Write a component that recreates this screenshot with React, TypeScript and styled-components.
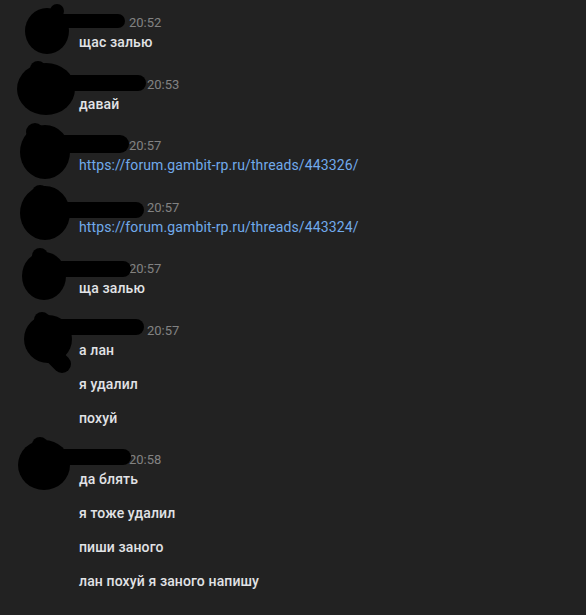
import styled, { createGlobalStyle } from 'styled-components';

interface Scribble {
  head: [number, number, number, number];
  bump?: [number, number, number];
  stroke: { x1: number; x2: number; y: number; w: number };
  tail?: [number, number, number, number];
}

interface Group {
  nameWidth: number;
  time: string;
  scribble: Scribble;
  messages: { text: string; link?: boolean }[];
}

const GROUPS: Group[] = [
  {
    nameWidth: 44,
    time: '20:52',
    scribble: { head: [47, 17, 22, 23], bump: [57, -3, 7], stroke: { x1: 58, x2: 118, y: 7, w: 14 } },
    messages: [{ text: 'щас залью' }]
  },
  {
    nameWidth: 62,
    time: '20:53',
    scribble: { head: [46, 13, 29, 26], bump: [38, -7, 8], stroke: { x1: 60, x2: 138, y: 7, w: 16 } },
    messages: [{ text: 'давай' }]
  },
  {
    nameWidth: 44,
    time: '20:57',
    scribble: { head: [45, 15, 25, 27], bump: [35, -5, 9], stroke: { x1: 50, x2: 120, y: 7, w: 18 } },
    messages: [{ text: 'https://forum.gambit-rp.ru/threads/443326/', link: true }]
  },
  {
    nameWidth: 62,
    time: '20:57',
    scribble: { head: [45, 14, 25, 27], bump: [40, -6, 8], stroke: { x1: 55, x2: 136, y: 11, w: 16 } },
    messages: [{ text: 'https://forum.gambit-rp.ru/threads/443324/', link: true }]
  },
  {
    nameWidth: 44,
    time: '20:57',
    scribble: { head: [44, 16, 22, 24], bump: [40, -4, 8], stroke: { x1: 58, x2: 123, y: 9, w: 16 } },
    messages: [{ text: 'ща залью' }]
  },
  {
    nameWidth: 62,
    time: '20:57',
    scribble: {
      head: [48, 17, 24, 24],
      bump: [42, -2, 8],
      stroke: { x1: 58, x2: 136, y: 5, w: 16 },
      tail: [42, 22, 62, 42]
    },
    messages: [{ text: 'а лан' }, { text: 'я удалил' }, { text: 'похуй' }]
  },
  {
    nameWidth: 44,
    time: '20:58',
    scribble: { head: [44, 14, 26, 25], bump: [40, -6, 8], stroke: { x1: 55, x2: 123, y: 6, w: 16 } },
    messages: [
      { text: 'да блять' },
      { text: 'я тоже удалил' },
      { text: 'пиши заного' },
      { text: 'лан похуй я заного напишу' }
    ]
  }
];

const GlobalStyle = createGlobalStyle`
  html, body {
    margin: 0;
    padding: 0;
    background: #222222;
  }
  body {
    font-family: Roboto, "Liberation Sans", Arial, sans-serif;
  }
`;

const Page = styled.div`
  min-height: 615px;
  padding-top: 14px;
  box-sizing: border-box;
  background: #222222;
`;

const MessageGroup = styled.div`
  position: relative;
  padding-left: 79px;
  margin-bottom: 24.5px;
`;

const Header = styled.div`
  display: flex;
  align-items: center;
  gap: 6px;
  height: 18px;
  margin-bottom: 1px;
`;

const Name = styled.span<{ $width: number }>`
  display: inline-block;
  width: ${({ $width }) => $width}px;
  height: 12px;
`;

const Time = styled.span`
  font-size: 13px;
  line-height: 18px;
  color: #828282;
`;

const Messages = styled.div`
  display: flex;
  flex-direction: column;
  gap: 16px;
`;

const Text = styled.div`
  font-size: 14px;
  font-weight: 500;
  line-height: 18px;
  letter-spacing: 0.12px;
  color: #e1e3e6;
`;

const Link = styled.a`
  display: block;
  font-size: 14px;
  line-height: 18px;
  letter-spacing: 0.12px;
  color: #71aaeb;
  text-decoration: none;
`;

const Redaction = styled.svg`
  position: absolute;
  left: 0;
  top: 0;
  overflow: visible;
`;

function ScribbleMark({ scribble }: { scribble: Scribble }) {
  const { head, bump, stroke, tail } = scribble;
  return (
    <Redaction width="1" height="1">
      <ellipse cx={head[0]} cy={head[1]} rx={head[2]} ry={head[3]} fill="#000" />
      {bump && <circle cx={bump[0]} cy={bump[1]} r={bump[2]} fill="#000" />}
      <line
        x1={stroke.x1}
        y1={stroke.y}
        x2={stroke.x2}
        y2={stroke.y}
        stroke="#000"
        strokeWidth={stroke.w}
        strokeLinecap="round"
      />
      {tail && (
        <line
          x1={tail[0]}
          y1={tail[1]}
          x2={tail[2]}
          y2={tail[3]}
          stroke="#000"
          strokeWidth={18}
          strokeLinecap="round"
        />
      )}
    </Redaction>
  );
}

export default function App() {
  return (
    <Page>
      <GlobalStyle />
      {GROUPS.map((group, i) => (
        <MessageGroup key={i}>
          <Header>
            <Name $width={group.nameWidth} />
            <Time>{group.time}</Time>
          </Header>
          <Messages>
            {group.messages.map((m, j) =>
              m.link ? (
                <Link key={j} href={m.text}>
                  {m.text}
                </Link>
              ) : (
                <Text key={j}>{m.text}</Text>
              )
            )}
          </Messages>
          <ScribbleMark scribble={group.scribble} />
        </MessageGroup>
      ))}
    </Page>
  );
}
